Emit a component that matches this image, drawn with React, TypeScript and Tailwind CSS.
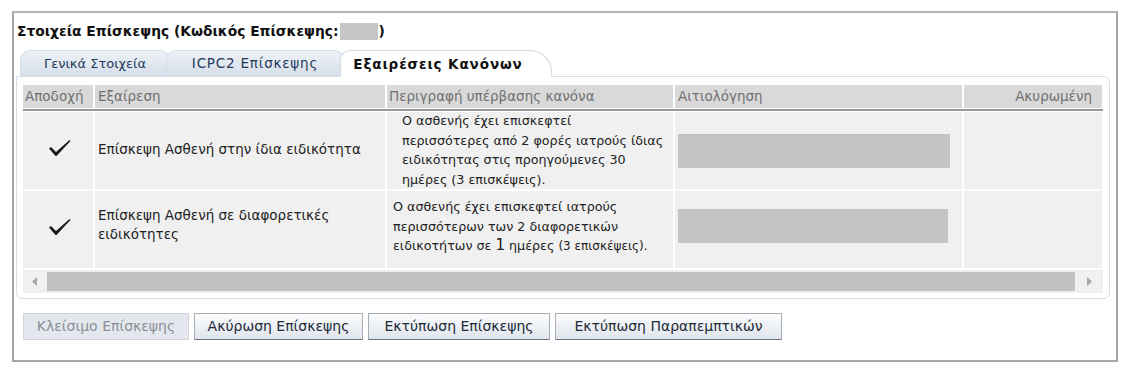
import React from 'react'

const cols = 'grid grid-cols-[70px_290px_286px_287px_138px] gap-x-[2px]'

const Check = () => (
  <svg width="24" height="18" viewBox="0 0 24 18">
    <path d="M1 9.5 L3 8 L8 13 L21.5 1 L22.5 2 L8.5 17 L7.5 17 Z" fill="#1a1a1a" />
  </svg>
)

const Tab = (props: { label: string; first?: boolean }) => {
  const { label, first } = props
  return (
    <div
      className={`flex h-[26px] items-center justify-center rounded-t-[10px] border border-b-0 border-[#d3dbe6] bg-gradient-to-b from-[#eef2f7] to-[#d6dee9] text-[#1f3a5c] ${
        first ? 'w-[150px] text-[13px]' : '-ml-[4px] w-[178px] text-[13.5px] tracking-[0.8px]'
      }`}
    >
      {label}
    </div>
  )
}

const Btn = (props: { label: string; disabled?: boolean; w: string }) => (
  <div
    className={`flex h-[27px] items-center justify-center border text-[14px] ${props.w} ${
      props.disabled
        ? 'border-[#d0d4da] bg-[#e4e8ee] text-[#8a8f96]'
        : 'border-[#a9aeb5] border-b-[#6f747a] bg-gradient-to-b from-[#fbfcfd] to-[#dfe5ec] text-[#1e2a38]'
    }`}
  >
    {props.label}
  </div>
)

const Row = (props: {
  name: React.ReactNode
  desc: React.ReactNode
  descPad: string
  boxTop: string
  boxW: string
  checkPad: string
  namePad: string
}) => (
  <div className={`${cols} h-[77px] shrink-0 overflow-hidden`}>
    <div className={`flex items-center justify-center bg-[#f0f0f0] pl-[4px] ${props.checkPad}`}>
      <Check />
    </div>
    <div className={`flex items-center bg-[#f0f0f0] pl-[3px] text-[13.5px] leading-[19px] text-[#222] ${props.namePad}`}>
      {props.name}
    </div>
    <div className={`bg-[#f0f0f0] text-[12.7px] leading-[19.5px] text-[#222] ${props.descPad}`}>{props.desc}</div>
    <div className={`bg-[#f0f0f0] pl-[3px] ${props.boxTop}`}>
      <div className={`h-[34px] bg-[#c4c4c4] ${props.boxW}`} />
    </div>
    <div className="bg-[#f0f0f0]" />
  </div>
)

export default function App() {
  return (
    <div className="h-[372px] w-[1127px] bg-white pl-[12px] pt-[11px] font-['DejaVu_Sans',sans-serif] text-[12px]">
      <div className="h-[351px] w-[1106px] border-2 border-[#a7a7a7] border-t-[#b5b5b5] bg-white">
        <div className="flex h-[36px] items-center pl-[3px] pt-[1px] text-[13.8px] font-bold text-[#111]">
          Στοιχεία Επίσκεψης (Κωδικός Επίσκεψης:
          <span className="mx-[1px] inline-block h-[17px] w-[38px] bg-[#c6c6c6]" />)
        </div>

        <div className="flex pl-[6px] pt-[1px]">
          <Tab label="Γενικά Στοιχεία" first />
          <Tab label="ICPC2 Επίσκεψης" />
          <div className="-ml-[4px] flex h-[27px] w-[212px] items-center justify-center rounded-t-[10px] rounded-tr-[22px] border border-b-0 border-[#d3dbe6] bg-white pr-[16px] text-[13.5px] font-bold tracking-[0.9px] text-[#111]">
            Εξαιρέσεις Κανόνων
          </div>
        </div>

        <div className="-mt-[1px] ml-[2px] h-[223px] w-[1094px] rounded-[6px] rounded-tl-none border border-[#d7dee8] px-[6px] pt-[8px]">
          <div className={`${cols} h-[23px] text-[13.5px] text-[#707070]`}>
            <div className="flex items-center bg-[#d9d9d9] pl-[2px]">Αποδοχή</div>
            <div className="flex items-center bg-[#d9d9d9] pl-[3px]">Εξαίρεση</div>
            <div className="flex items-center bg-[#d9d9d9] pl-[2px]">Περιγραφή υπέρβασης κανόνα</div>
            <div className="flex items-center bg-[#d9d9d9] pl-[3px]">Αιτιολόγηση</div>
            <div className="flex items-center justify-end bg-[#d9d9d9] pr-[10px]">Ακυρωμένη</div>
          </div>
          <div className="mt-[1px] h-[2px] bg-[#9a9a9a]" />

          <div className="mt-[1px] flex h-[156px] flex-col gap-[2px] overflow-hidden">
            <Row
              name="Επίσκεψη Ασθενή στην ίδια ειδικότητα"
              namePad="pb-[2px]"
              checkPad="pb-[6px]"
              descPad="pl-[15px] -mt-[1px]"
              boxTop="pt-[22px]"
              boxW="w-[272px]"
              desc={
                <>
                  Ο ασθενής έχει επισκεφτεί
                  <br />
                  περισσότερες από 2 φορές ιατρούς ίδιας
                  <br />
                  ειδικότητας στις προηγούμενες 30
                  <br />
                  ημέρες (3 επισκέψεις).
                </>
              }
            />
            <Row
              name={
                <span>
                  Επίσκεψη Ασθενή σε διαφορετικές
                  <br />
                  ειδικότητες
                </span>
              }
              namePad="pb-[10px]"
              checkPad="pb-[6px]"
              descPad="pl-[6px] pt-[6px]"
              boxTop="pt-[18px]"
              boxW="w-[270px]"
              desc={
                <>
                  Ο ασθενής έχει επισκεφτεί ιατρούς
                  <br />
                  περισσότερων των 2 διαφορετικών
                  <br />
                  ειδικοτήτων σε <span className="text-[15px]">1</span> ημέρες{' '}
                  <span className="text-[12px]">(3 επισκέψεις).</span>
                </>
              }
            />
          </div>

          <div className="mt-[2px] flex h-[23px] items-center bg-[#f0f0f0]">
            <div className="flex w-[24px] justify-center">
              <svg width="6" height="9" viewBox="0 0 6 9">
                <path d="M5 0 L0 4.5 L5 9 Z" fill="#a8a8a8" />
              </svg>
            </div>
            <div className="h-[19px] w-[1028px] bg-[#c2c2c2]" />
            <div className="flex flex-1 justify-center">
              <svg width="6" height="9" viewBox="0 0 6 9">
                <path d="M1 0 L6 4.5 L1 9 Z" fill="#a8a8a8" />
              </svg>
            </div>
          </div>
        </div>

        <div className="flex gap-[5px] pl-[9px] pt-[14px]">
          <Btn label="Κλείσιμο Επίσκεψης" disabled w="w-[166px]" />
          <Btn label="Ακύρωση Επίσκεψης" w="w-[169px]" />
          <Btn label="Εκτύπωση Επίσκεψης" w="w-[182px]" />
          <Btn label="Εκτύπωση Παραπεμπτικών" w="w-[227px]" />
        </div>
      </div>
    </div>
  )
}
